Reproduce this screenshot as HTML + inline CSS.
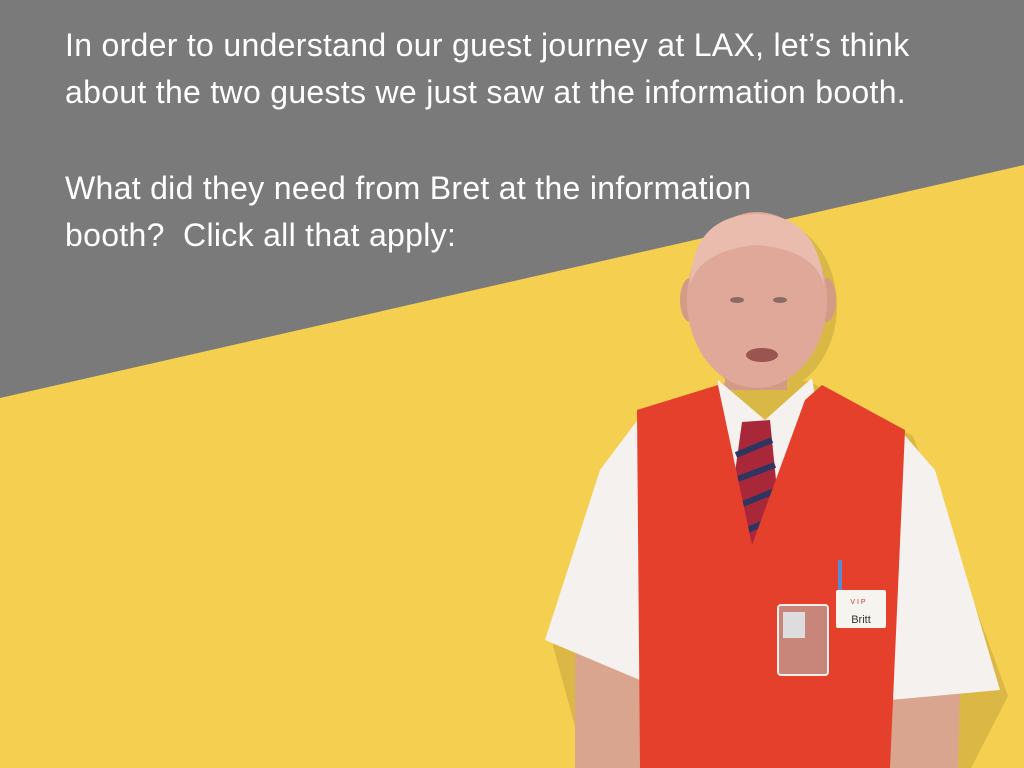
<!DOCTYPE html>
<html><head><style>
html,body{margin:0;padding:0}
body{width:1024px;height:768px;position:relative;overflow:hidden;background:#f4cf50;font-family:"Liberation Sans",sans-serif}
svg{position:absolute;left:0;top:0}
.t{position:absolute;left:65px;color:#fff;font-size:32px;letter-spacing:0.3px;line-height:47px;white-space:nowrap}
</style></head><body>
<svg width="1024" height="768" viewBox="0 0 1024 768">
<polygon points="0,0 1024,0 1024,165 0,398" fill="#7a7a7a"/>
<g transform="translate(8,6)" fill="#c9a93e" opacity="0.6">
<ellipse cx="757" cy="300" rx="72" ry="88"/>
<polygon points="640,410 720,375 800,375 905,430 1000,690 960,768 580,768 545,640"/>
</g>
<polygon points="575,630 642,660 640,768 575,768" fill="#d9a58f"/>
<polygon points="890,690 960,685 958,768 890,768" fill="#d9a58f"/>
<polygon points="645,410 600,470 545,640 640,680" fill="#f4f1ef"/>
<polygon points="900,430 935,470 1000,690 890,700" fill="#f4f1ef"/>
<ellipse cx="690" cy="300" rx="10" ry="22" fill="#d49a88"/>
<ellipse cx="826" cy="300" rx="10" ry="22" fill="#d49a88"/>
<rect x="725" y="340" width="62" height="50" fill="#d49a88"/>
<ellipse cx="757" cy="300" rx="70" ry="88" fill="#dfa898"/>
<path d="M690 285 Q692 215 757 214 Q818 215 824 285 Q815 250 757 245 Q700 250 690 285Z" fill="#e9bcae"/>
<ellipse cx="737" cy="300" rx="7" ry="3" fill="#8a6a66"/>
<ellipse cx="780" cy="300" rx="7" ry="3" fill="#8a6a66"/>
<ellipse cx="762" cy="355" rx="16" ry="7" fill="#9a5550"/>
<polygon points="718,380 765,420 812,378 822,440 800,520 720,520" fill="#f4f1ef"/>
<polygon points="742,422 770,420 778,500 752,545 734,480" fill="#a8283a"/>
<g stroke="#2e3560" stroke-width="6"><line x1="736" y1="455" x2="772" y2="440"/><line x1="735" y1="480" x2="775" y2="465"/><line x1="740" y1="505" x2="777" y2="490"/><line x1="748" y1="530" x2="770" y2="520"/></g>
<polygon points="637,410 718,385 752,545 805,400 822,385 905,430 890,768 640,768" fill="#e5402b"/>
<rect x="778" y="605" width="50" height="70" rx="3" fill="#c8857a" stroke="#eee" stroke-width="2"/>
<rect x="783" y="612" width="22" height="26" fill="#ddd"/>
<rect x="838" y="560" width="4" height="50" fill="#5a8ad0"/>
<rect x="836" y="590" width="50" height="38" rx="2" fill="#f6f4ee"/>
<text x="861" y="623" font-size="11" text-anchor="middle" fill="#333" font-family="Liberation Sans">Britt</text>
<text x="858" y="604" font-size="7" text-anchor="middle" fill="#c33" font-family="Liberation Sans">V I P</text>
</svg>
<div class="t" style="top:22px">In order to understand our guest journey at LAX, let’s think</div>
<div class="t" style="top:69px">about the two guests we just saw at the information booth.</div>
<div class="t" style="top:165px">What did they need from Bret at the information</div>
<div class="t" style="top:212px">booth?&nbsp; Click all that apply:</div>
</body></html>
